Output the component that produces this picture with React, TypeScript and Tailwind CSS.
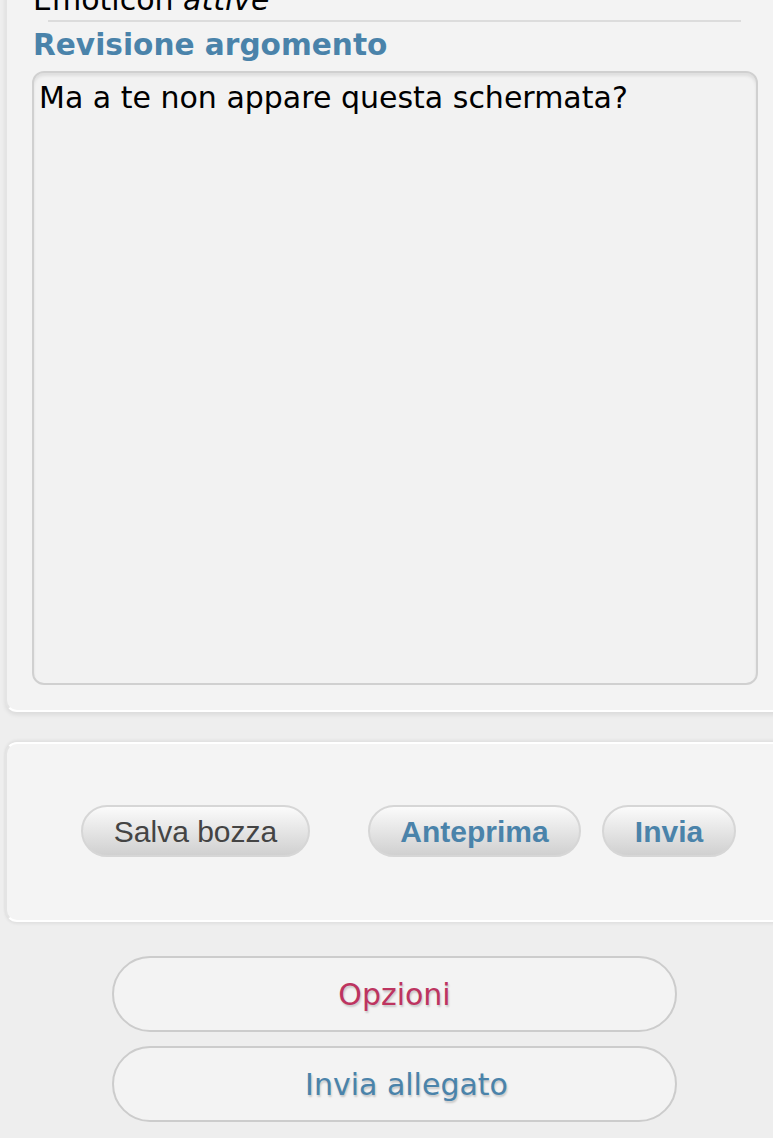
import React from "react";

const verdana = { fontFamily: '"DejaVu Sans", Verdana, sans-serif' };
const arial = { fontFamily: '"Liberation Sans", Arial, sans-serif' };

export default function App() {
  return (
    <div className="min-h-[1138px] w-[773px] overflow-hidden bg-[#eeeeee]" style={verdana}>
      {/* Top panel */}
      <div className="ml-[5px] w-[800px] rounded-bl-[12px] border-b-2 border-l-2 border-b-white border-l-[#e4e4e4] bg-[#f3f3f3] pb-[25px] shadow-[0_3px_4px_rgba(0,0,0,0.08)]">
        <div className="mt-[-15px] h-[30px] whitespace-nowrap pl-[26px] text-[30px] leading-[30px] text-black">
          Emoticon <i>attive</i>
        </div>
        <div className="ml-[41px] mt-[5px] h-[2px] w-[693px] bg-[#dcdcdc]" />
        <div className="mt-[8px] h-[30px] pl-[26px] text-[29.6px] font-bold leading-[30px] text-[#4a83aa]">
          Revisione argomento
        </div>
        <div className="ml-[25px] mt-[11px] h-[614px] w-[726px] rounded-[12px] border-2 border-[#d0d0d0] bg-[#f2f2f2] px-[5px] pt-[10px] text-[30px] leading-[30px] text-black shadow-[inset_0_3px_3px_rgba(0,0,0,0.08)]">
          Ma a te non appare questa schermata?
        </div>
      </div>

      {/* Buttons panel */}
      <div className="ml-[5px] mt-[30px] flex h-[180px] w-[800px] items-start rounded-l-[12px] border-l-2 border-t-2 border-b-2 border-l-[#e4e4e4] border-t-white border-b-white bg-[#f4f4f4] pl-[74px] pt-[61px] shadow-[0_-2px_3px_rgba(0,0,0,0.06),0_2px_3px_rgba(0,0,0,0.06)]" style={arial}>
        <button className="flex h-[52px] w-[229px] items-center justify-center rounded-full border-2 border-[#d6d6d6] bg-gradient-to-b from-[#fbfbfb] to-[#d0d0d0] text-[30px] text-[#444444]">
          Salva bozza
        </button>
        <button className="ml-[58px] flex h-[52px] w-[213px] items-center justify-center rounded-full border-2 border-[#d6d6d6] bg-gradient-to-b from-[#fbfbfb] to-[#d0d0d0] text-[30px] font-bold text-[#4a83aa]">
          Anteprima
        </button>
        <button className="ml-[21px] flex h-[52px] w-[134px] items-center justify-center rounded-full border-2 border-[#d6d6d6] bg-gradient-to-b from-[#fbfbfb] to-[#d0d0d0] text-[30px] font-bold text-[#4a83aa]">
          Invia
        </button>
      </div>

      {/* Bottom buttons */}
      <div className="mt-[34px] flex flex-col gap-[14px] pl-[112px]">
        <button className="flex h-[76px] w-[565px] items-center justify-center rounded-full border-2 border-[#cccccc] bg-[#f3f3f3] text-[30px] text-[#bd3460] [text-shadow:1px_2px_2px_rgba(0,0,0,0.18)]">
          Opzioni
        </button>
        <button className="flex h-[76px] w-[565px] items-center justify-center rounded-full border-2 border-[#cccccc] bg-[#f3f3f3] pl-[24px] text-[30px] text-[#4a83aa] [text-shadow:1px_2px_2px_rgba(0,0,0,0.18)]">
          Invia allegato
        </button>
      </div>
    </div>
  );
}
